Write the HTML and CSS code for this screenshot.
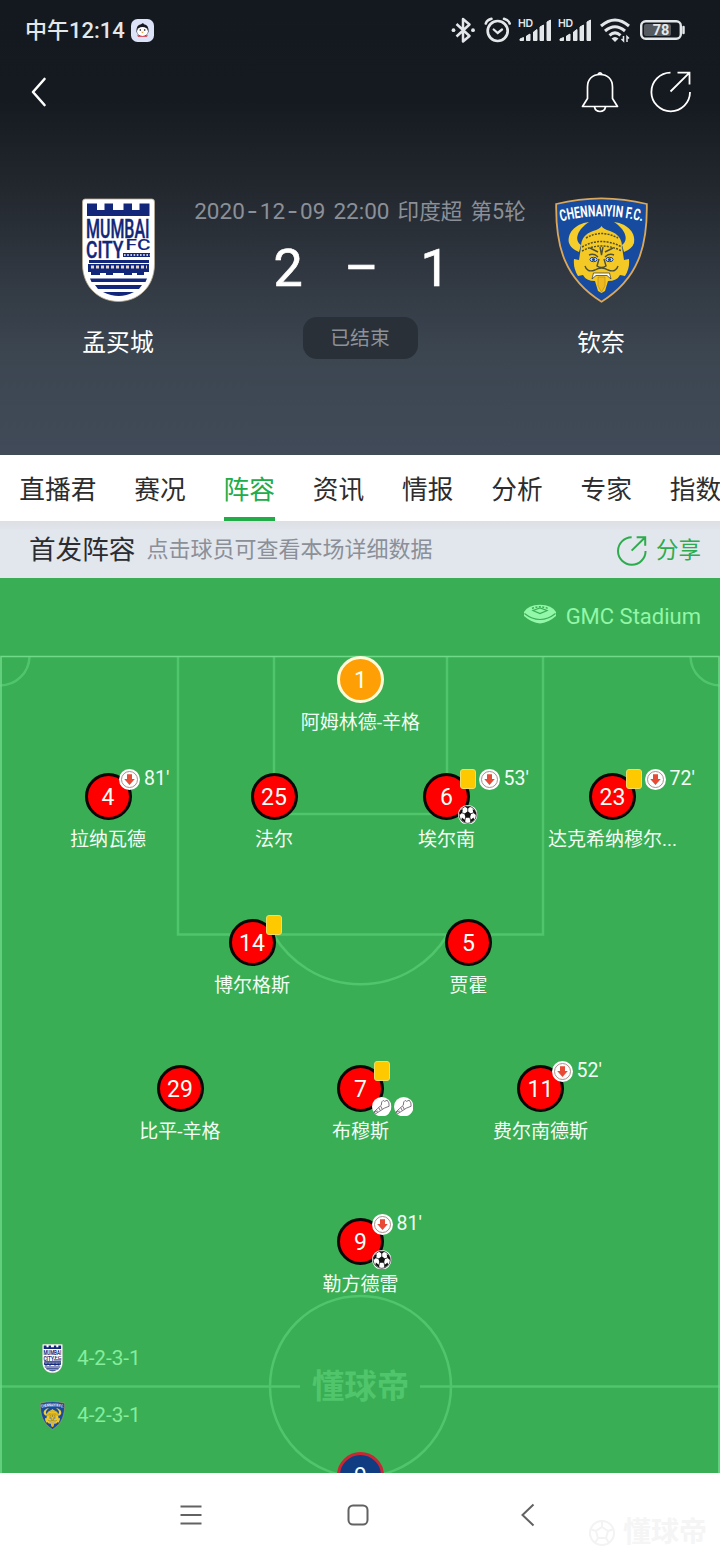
FILE: index.html
```html
<!DOCTYPE html>
<html lang="zh-CN">
<head>
<meta charset="utf-8">
<title>孟买城 2-1 钦奈</title>
<link rel="stylesheet" href="styles.css">
</head>
<body>
<svg class="defs" width="0" height="0" aria-hidden="true">
  <defs>
    <symbol id="mumbai" viewBox="0 0 73 104">
      <path d="M3 1H70Q72.500 1 72.500 4V66C72.500 90 55 103.500 36.500 103.500S.5 90 .5 66V4Q.5 1 3 1Z" fill="#fff" stroke="#b7aa91" stroke-width=".8"/>
      <path d="M5 5.500H15V12H22.500V5.500H31V12H41.500V5.500H50V12H57.500V5.500H67.500V18H5Z" fill="#13277a"/>
      <g fill="#13277a" font-family="Roboto, sans-serif" font-weight="500" stroke="#13277a" stroke-width=".4">
        <text x="4" y="39.500" font-size="25" textLength="63.500" lengthAdjust="spacingAndGlyphs">MUMBAI</text>
        <text x="4" y="59.500" font-size="24.500" textLength="37.500" lengthAdjust="spacingAndGlyphs">CITY</text>
        <text x="43.500" y="52" font-size="14.500" stroke="none" textLength="25" lengthAdjust="spacingAndGlyphs">FC</text>
      </g>
      <path d="M41 55H68V59H41Z" fill="#13277a"/>
      <path d="M42 57H68" stroke="#fff" stroke-width="1.300" stroke-dasharray="1.600 1.600"/>
      <path d="M7 62H67V65H7ZM6 66H67V74H62V77H55V75H50V77H42V75H31V77H24V75H18V77H9V74H6Z" fill="#13277a"/>
      <path d="M9 69H65" stroke="#e3d5c8" stroke-width="3" stroke-dasharray="3 2"/>
      <path d="M8 80.500H65L63.500 84H9.500ZM13 87H60L57 91H16ZM21 94H52Q37 102 21 94Z" fill="#13277a"/>
    </symbol>
    <symbol id="chennai" viewBox="0 0 93 106">
      <path d="M1.200 7Q24 1.500 46.500 1.300Q69 1.500 91.800 7C92.500 50 83 82 46.500 104.800C10 82 .5 50 1.200 7Z" fill="#164ba0" stroke="#dba759" stroke-width="1.800"/>
      <path id="arc" d="M6 24.500Q46 14 88 24.500" fill="none"/>
      <text fill="#fff" font-family="Roboto, sans-serif" font-weight="700" font-size="16" textLength="82" lengthAdjust="spacingAndGlyphs"><textPath href="#arc" textLength="82" lengthAdjust="spacingAndGlyphs">CHENNAIYIN F.C.</textPath></text>
      <path d="M34 25C19 27 12 37 14 46Q16 52 24 55L26 48C19 43 22 33 34 25ZM59 25C74 27 81 37 79 46Q77 52 69 55L67 48C74 43 71 33 59 25Z" fill="#f5ce2c"/>
      <path d="M46.500 29Q48 32 55 34Q67 38 67 50L69 63L74 62Q75 71 70 79L65 78Q62 84 53 84L50 94L46.500 96L43 94L40 84Q31 84 28 78L23 79Q18 71 19 62L24 63L26 50Q26 38 38 34Q45 32 46.500 29Z" fill="#f4c925"/>
      <path d="M31 41Q46 32 63 41M27 50Q46 39 67 50M27 54Q46 44 67 54" fill="none" stroke="#54501f" stroke-width="1.500" stroke-dasharray="2 1.200"/>
      <path d="M34 58Q39 56 43 60M59 58Q54 56 50 60M45 50L46.500 58L48 50M44 62L42 69Q46.500 72 51 69L49 62M30 69Q32 76 40 73Q46.500 69 53 73Q61 76 63 69M35 51L43 55M58 51L50 55" fill="none" stroke="#4c5138" stroke-width="1.400"/>
      <g fill="#dfe7e4" stroke="#264378" stroke-width="1"><ellipse cx="38.500" cy="62.500" rx="3.600" ry="2.200"/><ellipse cx="54.500" cy="62.500" rx="3.600" ry="2.200"/></g>
      <circle cx="38.500" cy="62.500" r="1.600" fill="#164ba0"/><circle cx="54.500" cy="62.500" r="1.600" fill="#164ba0"/>
      <path d="M37 82L38.500 76H54.500L56 82L52 78.500H41Z" fill="#fff" stroke="#2a3140" stroke-width=".7"/>
      <path d="M43 80H50V89L46.500 95L43 89Z" fill="#f0b91f" stroke="#a57819" stroke-width=".5"/>
    </symbol>
    <symbol id="signal" viewBox="0 0 36 26">
      <text x="1" y="10" font-size="10.500" font-family="Inter, sans-serif" font-weight="600" fill="currentColor" textLength="15">HD</text>
      <path d="M3 23.500H6.500V20.500L3 22ZM9.500 23.500H13V17L9.500 19ZM16.500 23.500H20V12.500L16.500 15ZM23 23.500H26.500V8L23 10ZM30 23.500H33.500V3L30 5Z" fill="currentColor" stroke="currentColor" stroke-linejoin="round"/>
    </symbol>
    <symbol id="share" viewBox="0 0 42 42">
      <path d="M20.500 1.700A19.300 19.300 0 1 0 40 21M20.500 20.500L39.500 1.700M27.500 1.700H39.500V13.500" fill="none" stroke="currentColor"/>
    </symbol>
    <symbol id="sub" viewBox="0 0 21 21">
      <circle cx="10.500" cy="10.500" r="10.500" fill="#fff"/><circle cx="10.500" cy="10.500" r="8" fill="#fff" stroke="#a1837c" stroke-width=".9"/>
      <path d="M8 5.200H13V10H15.800L10.500 16L5.200 10H8Z" fill="#e74a35"/>
    </symbol>
    <symbol id="ball" viewBox="0 0 20 20">
      <circle cx="10" cy="10" r="10" fill="#fff"/><circle cx="10" cy="10" r="8.800" fill="#fff" stroke="#222" stroke-width=".8"/>
      <path d="M10 6.300L13.500 8.900L12.200 13H7.800L6.500 8.900ZM7 1.600H13L10 3.800ZM1.400 8L3 5L5 4.300L4.300 8L1.800 10.300ZM18.600 8L17 5L15 4.300L15.700 8L18.200 10.300ZM3.500 15.500L4 12.800L7.300 15.500L7.600 18.300ZM16.500 15.500L16 12.800L12.700 15.500L12.400 18.300Z" fill="#111"/>
      <path d="M10 3V7M4 8L7 9M16 8L13 9M7 16L8 12M13 16L12 12" stroke="#111" stroke-width=".8"/>
    </symbol>
    <symbol id="boot" viewBox="0 0 20 20">
      <circle cx="10" cy="10" r="10" fill="#fff"/>
      <path d="M10 5L11.500 3.500L13 4.500L15.500 3.200L17.300 6L17.500 9.500L12.500 11.500L8 14.500L4 17L2 15.500L5.500 12L9.500 8.500ZM7 11L8.500 14M9 9.500L10.500 12.500M2.500 14.800L6 14.500" fill="none" stroke="#69616b" stroke-width=".9" stroke-linejoin="round"/>
    </symbol>
  </defs>
</svg>

<header class="hero">
  <div class="status">
    <span class="time">中午12:14</span>
    <svg class="penguin" viewBox="0 0 23 23"><rect width="23" height="23" rx="6.500" fill="#dce3f8"/><path d="M5.500 13Q5 6 10 5.300L12 4L13 5.300Q18 6 17.500 13L15 17H8Z" fill="#17191f"/><ellipse cx="11.500" cy="12.500" rx="5.500" ry="4.500" fill="#fff"/><path d="M6 15.500Q11.500 18.500 17 15.500L16 18H7Z" fill="#d65766"/><circle cx="9.300" cy="11" r=".8"/><circle cx="13.700" cy="11" r=".8"/><path d="M10 12.800H13L11.500 14.300Z" fill="#e6a232"/></svg>
    <div class="status-icons">
      <svg class="bt" viewBox="0 0 26 28"><path d="M6.500 8L19.500 20L13 25.500V3L19.500 8.500L6.500 20.500" fill="none" stroke="currentColor" stroke-width="2.500" stroke-linejoin="round"/><circle cx="3.500" cy="14.200" r="1.900" fill="currentColor"/><circle cx="23" cy="14.200" r="1.900" fill="currentColor"/></svg>
      <svg class="alarm" viewBox="0 0 28 28"><g fill="none" stroke="currentColor" stroke-linecap="round"><circle cx="13.700" cy="15" r="10" stroke-width="2.700"/><path d="M9.700 13.500L13.700 17L18 13.500" stroke-width="2.300"/><path d="M1.800 7.500Q3 4 7.500 2.800M25.700 7.500Q24.500 4 20 2.800" stroke-width="2.500"/></g></svg>
      <svg class="sig"><use href="#signal"/></svg>
      <svg class="sig sig2"><use href="#signal"/></svg>
      <svg class="wifi" viewBox="0 0 32 26"><g fill="none" stroke="currentColor" stroke-width="3"><path d="M2 9Q16 -3 30 9M6 14Q16 5.500 26 14M10.500 18.300Q16 13.500 21.500 18.300"/></g><path d="M12.500 21.500Q16 18.500 19.500 21.500L16 25Z" fill="currentColor"/><path d="M24.500 19V24L22.500 22M28 25V19.500L30 21.500" fill="none" stroke="currentColor" stroke-width="1.500"/></svg>
      <svg class="battery" viewBox="0 0 48 22"><rect x="2.200" y="2.200" width="39.600" height="17.600" rx="4.500" fill="none" stroke="currentColor" stroke-width="2.400"/><rect x="5" y="5" width="27" height="12" rx="2" fill="#555960"/><path d="M44.500 8V14" stroke="currentColor" stroke-width="2.500" stroke-linecap="round"/><text x="22" y="15.800" text-anchor="middle" font-family="Roboto, sans-serif" font-weight="700" font-size="14.500" fill="currentColor">78</text></svg>
    </div>
  </div>
  <nav class="topnav">
    <svg class="back" viewBox="0 0 16 32"><path d="M13.500 3L2 16L13.500 29" fill="none" stroke="currentColor" stroke-width="2.600" stroke-linecap="round" stroke-linejoin="round"/></svg>
    <svg class="bell" viewBox="0 0 38 42"><path d="M1.500 35.500L6.500 27.500V16C6.500 8 11.500 3.500 19 3.500S31.500 8 31.500 16V27.500L36.500 35.500ZM13.500 36Q14.500 40.500 19 40.500T24.500 36M17 3Q19 .5 21 3" fill="none" stroke="currentColor" stroke-width="1.700" stroke-linejoin="round"/></svg>
    <svg class="share-top"><use href="#share"/></svg>
  </nav>
  <section class="match">
    <div class="team">
      <svg class="crest crest-home"><use href="#mumbai"/></svg>
      <span class="team-name">孟买城</span>
    </div>
    <div class="summary">
      <p class="date">2020<i>-</i>12<i>-</i>09 22:00 <span>印度超</span> <span>第5轮</span></p>
      <p class="score"><b>2</b><b class="dash">–</b><b>1</b></p>
      <span class="state">已结束</span>
    </div>
    <div class="team">
      <svg class="crest crest-away"><use href="#chennai"/></svg>
      <span class="team-name">钦奈</span>
    </div>
  </section>
</header>

<nav class="tabs">
  <span>直播君</span><span>赛况</span><span class="active">阵容</span><span>资讯</span><span>情报</span><span>分析</span><span>专家</span><span>指数</span>
</nav>

<div class="lineup-head">
  <h2>首发阵容</h2>
  <span class="hint">点击球员可查看本场详细数据</span>
  <span class="share"><svg><use href="#share"/></svg>分享</span>
</div>

<main class="pitch">
  <svg class="lines" viewBox="0 0 720 895">
    <g fill="none" stroke="#51c56c" stroke-width="2.500">
      <path d="M178 79V356.500H543V79M274 79V236H447V79M273.500 356.500A101 101 0 0 0 447.500 356.500M0 107.500A29.500 29.500 0 0 0 29.500 79M720 107.500A29.500 29.500 0 0 1 690.500 79M0 808.500H300M420 808.500H720"/>
      <circle cx="360.500" cy="808.500" r="90.500"/>
      <path d="M1 895V78.500H719V895" stroke="#6fda88" stroke-width="1.500"/>
    </g>
  </svg>
  <div class="stadium">
    <svg viewBox="0 0 34 20"><path d="M1 8Q5 1 17 .7Q29 1 33 8V12Q25 19 17 19.500Q9 19 1 12Z" fill="currentColor"/><path d="M1.500 9.500Q9 15.500 17 15.500T32.500 9.500M10 6.500L17 4L24 6.500L17 9.500Z" fill="none" stroke="#39ae54" stroke-width="1.200"/><path d="M9 4.500Q17 1 25 4.500" fill="none" stroke="#39ae54" stroke-width="1.500" stroke-dasharray="2 1.500"/></svg>
    GMC Stadium
  </div>

  <div class="player keeper gk"><b>1</b><span>阿姆林德-辛格</span></div>
  <div class="player lb"><b>4</b><span>拉纳瓦德</span><div class="top"><svg class="ev"><use href="#sub"/></svg><em>81'</em></div></div>
  <div class="player lcb"><b>25</b><span>法尔</span></div>
  <div class="player rcb"><b>6</b><span>埃尔南</span><div class="top"><i class="card"></i><svg class="ev"><use href="#sub"/></svg><em>53'</em></div><div class="bottom"><svg><use href="#ball"/></svg></div></div>
  <div class="player rb"><b>23</b><span>达克希纳穆尔...</span><div class="top"><i class="card"></i><svg class="ev"><use href="#sub"/></svg><em>72'</em></div></div>
  <div class="player ldm"><b>14</b><span>博尔格斯</span><div class="top"><i class="card"></i></div></div>
  <div class="player rdm"><b>5</b><span>贾霍</span></div>
  <div class="player lam"><b>29</b><span>比平-辛格</span></div>
  <div class="player cam"><b>7</b><span>布穆斯</span><div class="top"><i class="card"></i></div><div class="bottom"><svg><use href="#boot"/></svg><svg><use href="#boot"/></svg></div></div>
  <div class="player ram"><b>11</b><span>费尔南德斯</span><div class="top"><svg class="ev"><use href="#sub"/></svg><em>52'</em></div></div>
  <div class="player st"><b>9</b><span>勒方德雷</span><div class="top"><svg class="ev"><use href="#sub"/></svg><em>81'</em></div><div class="bottom"><svg><use href="#ball"/></svg></div></div>
  <div class="player away away-st"><b>9</b></div>

  <div class="brand">懂球帝</div>
  <div class="formations">
    <div><svg><use href="#mumbai"/></svg>4-2-3-1</div>
    <div><svg><use href="#chennai"/></svg>4-2-3-1</div>
  </div>
</main>

<footer class="sysnav">
  <svg viewBox="0 0 24 24"><path d="M1.500 3.500H22.500M1.500 12H22.500M1.500 20.500H22.500"/></svg>
  <svg viewBox="0 0 24 24"><rect x="2.500" y="2.500" width="19" height="19" rx="4.500"/></svg>
  <svg viewBox="0 0 24 24"><path d="M17.500 1.500L6.500 12L17.500 22.500"/></svg>
  <div class="mark"><svg viewBox="0 0 28 28"><circle cx="14" cy="14" r="12"/><path d="M14 8L20 12L18 19H10L8 12ZM14 2V8M20 12L26 10M18 19L21 24M10 19L7 24M8 12L2 10"/></svg>懂球帝</div>
</footer>
</body>
</html>
```
FILE: styles.css
```css
* { box-sizing: border-box; }
body {
  margin: 0;
  width: 720px;
  height: 1560px;
  overflow: hidden;
  background: #fff;
  font-family: Roboto, "Noto Sans CJK SC", sans-serif;
}
svg { display: block; flex: none; }
.defs { position: absolute; }
p, h2 { margin: 0; }

.hero {
  height: 455px;
  color: #fff;
  background: linear-gradient(#14181f 0, #151920 100px, #23282f 190px, #303740 270px, #3c4651 355px, #414a58 455px);
}
.status {
  display: flex;
  align-items: center;
  height: 60px;
  padding: 0 33px 0 25px;
  color: #e4e7ea;
}
.time { width: 100px; padding-top: 2px; font-size: 22px; font-weight: 500; line-height: 30px; white-space: nowrap; }
.penguin { width: 23px; height: 23px; margin-left: 6px; }
.status-icons { display: flex; align-items: center; margin-left: auto; }
.bt { width: 26px; height: 28px; }
.alarm { width: 28px; height: 28px; margin-left: 8px; }
.sig { width: 36px; height: 26px; margin-left: 5px; }
.sig2 { margin-left: 4px; }
.wifi { width: 32px; height: 26px; margin-left: 6px; }
.battery { width: 48px; height: 22px; margin-left: 8px; }

.topnav { display: flex; align-items: center; height: 64px; padding: 0 28px 0 31px; }
.back { width: 16px; height: 32px; }
.bell { width: 38px; height: 42px; margin-left: auto; }
.share-top { width: 42px; height: 42px; margin-left: 31px; stroke-width: 1.8; }

.match { display: grid; grid-template-columns: 190px 1fr 190px; padding: 0 24px 0 23px; }
.team { display: flex; flex-direction: column; align-items: center; padding-top: 73px; }
.crest { height: 106px; }
.crest-home { width: 73px; }
.crest-away { width: 93px; }
.team-name { margin-top: 22px; font-size: 23.800px; line-height: 36px; }
.summary { display: flex; flex-direction: column; align-items: center; padding: 70px 0 0 1px; white-space: nowrap; margin: 0 -30px; }
.date { font-size: 22.500px; line-height: 34px; word-spacing: 2.500px; color: #8b9098; }
.date span { font-size: 21.600px; }
.date i { display: inline-block; width: 15px; text-align: center; font: 400 24px/20px Inter, sans-serif; }
.score { display: grid; grid-template-columns: repeat(3, 73.500px); margin: 5px 0 0 3px; font-size: 52px; line-height: 70px; text-align: center; }
.score b { font-weight: 400; -webkit-text-stroke: 0.7px #fff; }
.state {
  width: 115px;
  height: 42px;
  margin-top: 13px;
  border-radius: 14px;
  background: #2a3038;
  color: #8d9299;
  font-size: 19.800px;
  line-height: 44px;
  text-align: center;
}

.tabs {
  display: flex;
  gap: 37.900px;
  height: 66px;
  padding-left: 19.300px;
  overflow: hidden;
  white-space: nowrap;
  font-size: 25.700px;
  line-height: 71px;
  color: #2d2d2d;
}
.tabs span { flex: none; height: 66px; }
.tabs .active { color: #21ac48; border-bottom: 4px solid #21ac48; }

.lineup-head {
  display: flex;
  align-items: center;
  height: 57px;
  padding: 1px 19px 0 29px;
  background: linear-gradient(#dcdfe3, #e2e6ed 10px);
}
.lineup-head h2 { font-size: 26.600px; font-weight: 400; line-height: 40px; color: #2b2d30; }
.hint { margin-left: 11px; font-size: 22px; line-height: 34px; color: #8b8f98; }
.share { display: flex; align-items: center; gap: 9px; margin-left: auto; font-size: 22.500px; line-height: 34px; color: #2cac4d; }
.share svg { width: 30px; height: 30px; margin-top: 2px; stroke-width: 2.800; }

.pitch { position: relative; height: 895px; overflow: hidden; background: #39ae54; }
.lines { position: absolute; inset: 0; width: 720px; height: 895px; }
.stadium {
  position: relative;
  display: flex;
  align-items: center;
  justify-content: flex-end;
  gap: 9px;
  height: 77px;
  padding-right: 19px;
  font-size: 22px;
  color: #92f7a9;
}
.stadium svg { width: 34px; height: 20px; margin-top: -6px; }

.player {
  position: absolute;
  display: flex;
  flex-direction: column;
  align-items: center;
  width: 160px;
  margin: -23.700px 0 0 -80px;
  color: #f3fff5;
}
.player b {
  width: 47px;
  height: 47px;
  border: 3px solid #080808;
  border-radius: 50%;
  background: #fe0000;
  font-size: 23px;
  font-weight: 400;
  line-height: 43px;
  text-align: center;
}
.player span { margin-top: 6px; font-size: 19px; line-height: 28px; white-space: nowrap; }
.keeper b { background: #ff9f06; border-color: #fffbd9; }
.away b { background: #103c82; border-color: #c92735; }
.top { position: absolute; top: -5px; left: 91px; display: flex; align-items: center; height: 21px; }
.top .ev { width: 21px; height: 21px; margin-top: 2px; }
.card { width: 16px; height: 20px; margin: 1px 2.500px 0; border: 1px solid #eddf69; border-radius: 3px; background: #ffc900; }
.top em { margin-left: 4px; font-style: normal; font-size: 19.500px; line-height: 20px; }
.bottom { position: absolute; top: 31.500px; left: 91.500px; display: flex; gap: 2px; }
.bottom svg { width: 19.500px; height: 19.500px; }

.gk { left: 360.500px; top: 102px; }
.lb { left: 108px; top: 219px; }
.lcb { left: 274px; top: 219px; }
.rcb { left: 446.500px; top: 219px; }
.rb { left: 612.500px; top: 219px; }
.ldm { left: 252px; top: 365px; }
.rdm { left: 468.500px; top: 365px; }
.lam { left: 180px; top: 511px; }
.cam { left: 360.500px; top: 511px; }
.ram { left: 540.500px; top: 511px; }
.st { left: 360.500px; top: 664px; }
.away-st { left: 360.500px; top: 898px; }

.brand {
  position: absolute;
  left: 300px;
  top: 786px;
  width: 121px;
  text-align: center;
  font-size: 32.500px;
  font-weight: 700;
  line-height: 46px;
  color: #51c56c;
}
.formations { position: absolute; left: 40px; top: 765px; display: grid; gap: 27px; }
.formations div { display: flex; align-items: center; gap: 12px; height: 30px; font-size: 20.700px; color: #85ed9d; }
.formations svg { width: 25px; height: 29px; }

.sysnav {
  position: relative;
  display: flex;
  align-items: center;
  gap: 144px;
  height: 87px;
  padding: 0 0 4px 178.500px;
  background: #fff;
}
.sysnav svg { width: 24px; height: 24px; fill: none; stroke: #626262; stroke-width: 2; }
.sysnav > svg:nth-child(2) { margin: 0 2px 0 -1px; }
.mark {
  position: absolute;
  right: 13px;
  bottom: 10px;
  display: flex;
  align-items: center;
  gap: 7px;
  font-size: 28px;
  font-weight: 700;
  line-height: 34px;
  color: #f5f5f5;
}
.sysnav .mark svg { width: 28px; height: 28px; stroke: #f3f3f3; }
```
